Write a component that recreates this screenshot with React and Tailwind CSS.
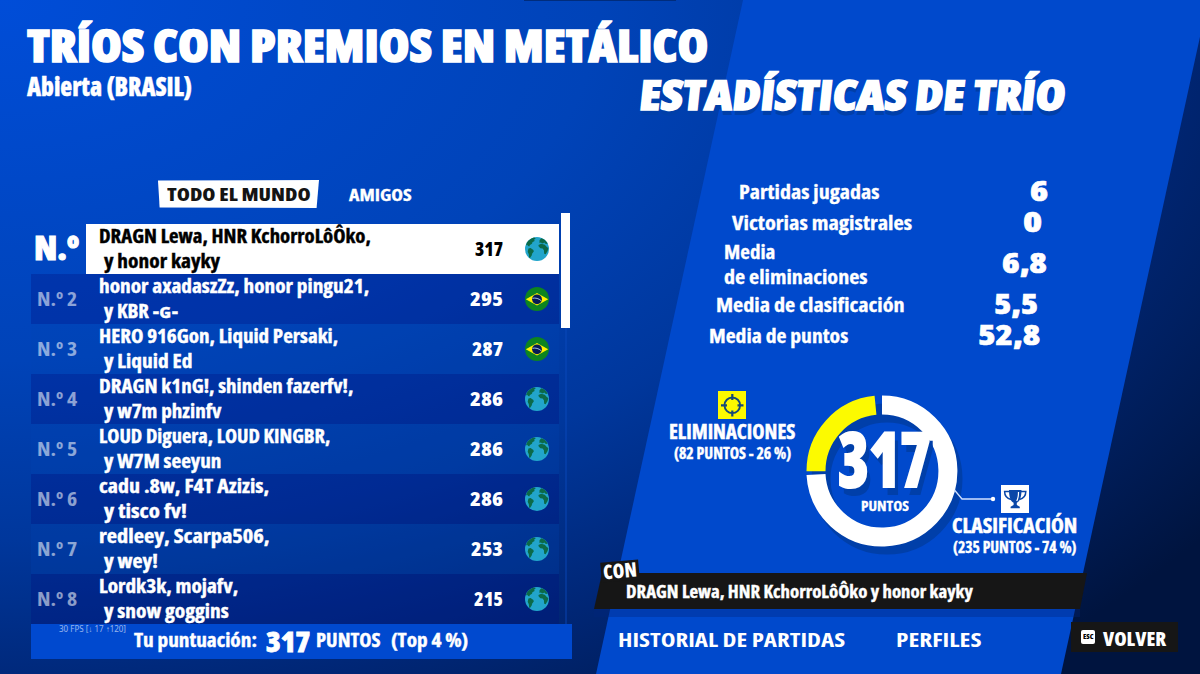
import React, { useLayoutEffect, useRef, useState } from "react";

const rows = [
  { rank: "N.º 2", first: "honor axadaszZz, honor pingu21,", firstW: 270, second: "y KBR -ɢ-", secondW: 74, points: "295", pointsW: 33, region: "br" },
  { rank: "N.º 3", first: "HERO 916Gon, Liquid Persaki,", firstW: 239, second: "y Liquid Ed", secondW: 88, points: "287", pointsW: 31, region: "br" },
  { rank: "N.º 4", first: "DRAGN k1nG!, shinden fazerfv!,", firstW: 254, second: "y w7m phzinfv", secondW: 118, points: "286", pointsW: 33, region: "world" },
  { rank: "N.º 5", first: "LOUD Diguera, LOUD KINGBR,", firstW: 231, second: "y W7M seeyun", secondW: 118, points: "286", pointsW: 33, region: "world" },
  { rank: "N.º 6", first: "cadu .8w, F4T Azizis,", firstW: 170, second: "y tisco fv!", secondW: 83, points: "286", pointsW: 33, region: "world" },
  { rank: "N.º 7", first: "redleey, Scarpa506,", firstW: 171, second: "y wey!", secondW: 54, points: "253", pointsW: 32, region: "world" },
  { rank: "N.º 8", first: "Lordk3k, mojafv,", firstW: 139, second: "y snow goggins", secondW: 125, points: "215", pointsW: 29, region: "world" },
];

// Squeezes a line of text to the given width, for the condensed lettering
const Fit = ({ w, className = "", children }) => {
  const ref = useRef(null);
  const [scale, setScale] = useState(1);

  useLayoutEffect(() => {
    setScale(w / ref.current.offsetWidth);
  }, [w, children]);

  return (
    <span className={`block shrink-0 whitespace-nowrap ${className}`} style={{ width: w }}>
      <span
        ref={ref}
        className="inline-block origin-left align-top"
        style={{ transform: `scaleX(${scale})` }}
      >
        {children}
      </span>
    </span>
  );
};

const Globe = () => (
  <svg viewBox="0 0 24 24" className="size-6 shrink-0">
    <circle cx="12" cy="12" r="12" fill="#22a5cb" />
    <g fill="#0c6a48">
      <path d="M2 5.600C3.600 3.100 6 1.300 9 .5l1.800.8-1.600 1.300.4 1.300-2.200 1.300-.4 1.600-2 1.200-.8 1.500-1.300-.8-.6-.9-1.400.6z" />
      <path d="M3.400 11.600l2.200-.5 2.800 1.800.4 1.500-1.600 2.100-.5 2-1.700 2.500-.9-.6-.3-3.100-1.100-2.500z" />
      <path d="M14.500 3.300l1.800-2 3 1.300 2.400 2.400.9 1.900-2.200-.2-1-1.100-1.700.8-1.900-.8-1.300.3z" />
      <path d="M13.400 7.900l2.800-1.100 3.600.9 2 2.300 1.500.9-.7 3.100-2 3.200-1.400-.4-.3-3.500-1.300-1.700-2.200-.3-1.700-1.700z" />
    </g>
  </svg>
);

const Brazil = () => (
  <svg viewBox="0 0 24 24" className="size-6 shrink-0">
    <circle cx="12" cy="12" r="12" fill="#0d8420" />
    <path d="M.8 12.300L12 6l11.200 6.300L12 18.600z" fill="#fff200" />
    <circle cx="12" cy="12.300" r="4.900" fill="#071b56" />
    <path d="M7.500 11.300c3-.7 6.300.2 8.700 2.400" stroke="#a9bde0" strokeWidth="1" fill="none" />
  </svg>
);

const RowInfo = ({ first, firstW, second, secondW, points, pointsW, region }) => (
  <>
    <div className="flex-1 pb-px pl-[13px] text-[19px] leading-[25px] font-bold [-webkit-text-stroke:0.4px_currentColor]">
      <Fit w={firstW}>{first}</Fit>
      <Fit w={secondW} className="ml-[5px]">{second}</Fit>
    </div>
    <Fit w={pointsW} className="mr-[22px] pb-px text-[19.5px] font-extrabold">{points}</Fit>
    {region === "br" ? <Brazil /> : <Globe />}
  </>
);

const Leaderboard = () => (
  <div className="mt-[5px] ml-1 flex h-[411px] gap-0.5">
    <div className="flex w-[528px] flex-col pt-[11px]">
      <div className="flex h-[50px] items-center">
        <Fit w={45} className="mr-[7px] ml-[3px] pb-1 text-[34px] leading-[46px] font-extrabold [-webkit-text-stroke:1px_white]">N.º</Fit>
        <div className="flex h-full flex-1 items-center bg-white pr-2.5 text-black">
          <RowInfo
            first="DRAGN Lewa, HNR KchorroLôÔko,"
            firstW={272}
            second="y honor kayky"
            secondW={116}
            points="317"
            pointsW={28}
            region="world"
          />
        </div>
      </div>
      {rows.map((row) => (
        <div
          key={row.rank}
          className="flex h-[50px] items-center pr-2.5 odd:bg-[#0044b4]/25 even:bg-[#000c80]/30"
        >
          <Fit w={40} className="mr-[9px] ml-1.5 text-[19.5px] font-bold opacity-55">{row.rank}</Fit>
          <RowInfo {...row} />
        </div>
      ))}
    </div>
    <div className="flex w-[9px] flex-col items-center">
      <div className="h-[115px] w-full bg-white"></div>
      <div className="w-0.5 flex-1 bg-[#0b4cc0]/40"></div>
    </div>
  </div>
);

const StatValue = ({ w, children }) => (
  <Fit w={w} className="pb-[5px] text-[28.5px] leading-[26px] font-extrabold [-webkit-text-stroke:0.6px_white]">{children}</Fit>
);

const Stat = ({ className, label, labelW, value, valueW }) => (
  <div className={`flex h-[31px] items-center justify-between ${className}`}>
    <Fit w={labelW} className="text-[19px] font-bold [-webkit-text-stroke:0.3px_white]">{label}</Fit>
    <StatValue w={valueW}>{value}</StatValue>
  </div>
);

const Donut = () => (
  <div className="grid h-[166px] w-[160px] shrink-0">
    <svg viewBox="806 391 160 166" className="col-start-1 row-start-1 overflow-visible">
      <g fill="none" strokeWidth="19" stroke="#003fa9">
        <circle cx="887" cy="479" r="66" />
      </g>
      <g fill="none" strokeWidth="19">
        <path d="M882 405a66 66 0 1 1-66 69.500" stroke="#fff" />
        <path d="M816 471.300a66 66 0 0 1 59.500-66" stroke="#fcfa00" />
      </g>
      <path d="M954.500 490l7.500 9h29" stroke="#cfe0ff" strokeWidth="1.300" fill="none" />
      <circle cx="993" cy="499" r="2.200" fill="#fff" />
    </svg>
    <div className="z-10 col-start-1 row-start-1 flex flex-col pt-[29px]">
      <Fit
        w={93}
        className="ml-8 text-[76px] leading-[76px] font-extrabold [-webkit-text-stroke:2px_white] [text-shadow:5px_8px_0_#003fa9]"
      >
        317
      </Fit>
      <Fit w={48} className="z-10 mt-[4px] ml-[55px] text-[14px] leading-[12px] font-bold [-webkit-text-stroke:0.3px_white]">PUNTOS</Fit>
    </div>
  </div>
);

const Chart = () => (
  <div className="mt-[39px] flex h-[166px] pl-[69px]">
    <div className="flex w-[126px] shrink-0 flex-col items-center">
      <svg viewBox="0 0 28 28" className="size-7">
        <path d="M0 0h28v28H0z" fill="#fcfa00" />
        <circle cx="14.300" cy="14.300" r="7.800" fill="none" stroke="#164a78" strokeWidth="1.900" />
        <path d="M14.300 3v6M14.300 19.500v6M3 14.300h6M19.500 14.300h6" stroke="#164a78" strokeWidth="2.200" />
      </svg>
      <Fit w={126} className="text-[20.5px] leading-[24px] font-bold [-webkit-text-stroke:0.5px_white]">ELIMINACIONES</Fit>
      <Fit w={117} className="mt-0.5 text-[15.5px] leading-[17px] font-bold [-webkit-text-stroke:0.4px_white]">(82 PUNTOS - 26 %)</Fit>
    </div>
    <div className="ml-[11px]">
      <Donut />
    </div>
    <div className="-ml-[14px] flex w-[125px] shrink-0 flex-col items-center pt-[94px]">
      <svg viewBox="0 0 28 28" className="size-7">
        <path d="M0 0h28v28H0z" fill="#fff" />
        <path d="M8 5h12.500c0 6-1.200 11-4.700 12.800v2.200l3 1.800v1.400H9.600v-1.400l3-1.800v-2.200C9.200 16 8 11 8 5z" fill="#0a47a8" />
        <path d="M8.500 6.500H3.600c0 4 2.400 7 6.400 8M20 6.500h4.800c0 4-2.400 7-6.400 8" fill="none" stroke="#0a47a8" strokeWidth="1.500" />
        <path d="M17.500 7c0 4-.6 7-1.800 9" stroke="#fff" strokeWidth="1.200" fill="none" />
      </svg>
      <Fit w={125} className="text-[20.5px] leading-[24px] font-bold [-webkit-text-stroke:0.5px_white]">CLASIFICACIÓN</Fit>
      <Fit w={123} className="mt-0.5 text-[15.5px] leading-[17px] font-bold [-webkit-text-stroke:0.4px_white]">(235 PUNTOS - 74 %)</Fit>
    </div>
  </div>
);

const App = () => {
  return (
    <div className="grid h-[674px] w-[1200px] overflow-hidden bg-[radial-gradient(1500px_900px_at_0_0,#004dd8_0%,#0043b8_40%,#00379c_60%,#002675_78%,#002062_86%,#00143f_100%)] font-['Open_Sans','Noto_Sans',sans-serif] font-stretch-condensed text-white">
      <div className="col-start-1 row-start-1 bg-[#0049cc] [clip-path:polygon(743px_0,1208px_0,1061px_674px,596px_674px)]"></div>

      {/* edge of the window hidden above */}
      <div className="z-10 col-start-1 row-start-1 ml-[524px] h-px w-[152px] bg-[#002c7c]"></div>

      <div className="z-10 col-start-1 row-start-1 flex w-[600px] flex-col pt-[22px] pl-[27px]">
        <Fit w={681} className="text-[45px] leading-[46px] font-extrabold [-webkit-text-stroke:1.5px_white]">
          TRÍOS CON PREMIOS EN METÁLICO
        </Fit>
        <Fit w={165} className="mt-[4px] text-[27px] leading-[27px] font-extrabold [-webkit-text-stroke:0.4px_white]">Abierta (BRASIL)</Fit>

        <div className="mt-[81px] ml-[131px] flex h-7 items-center gap-[30px]">
          <div className="flex h-full w-[161px] items-center justify-center bg-white text-[#141414] [clip-path:polygon(0_2%,100%_0,98.5%_100%,1%_98%)]">
            <Fit w={143} className="pt-px text-[17.5px] font-extrabold">TODO EL MUNDO</Fit>
          </div>
          <Fit w={63} className="pt-px text-[16px] font-bold [-webkit-text-stroke:0.3px_white]">AMIGOS</Fit>
        </div>

        <Leaderboard />

        <div className="relative ml-1 flex h-[35px] w-[541px] items-center bg-[#0049cf] pb-0.5 pl-[103px]">
          <span className="absolute top-0 left-7 font-['Noto_Sans'] text-[8px] leading-[9px] text-white/60">
            <Fit w={67}>30 FPS [↓ 17 ↑120]</Fit>
          </span>
          <Fit w={123} className="text-[19px] font-bold [-webkit-text-stroke:0.4px_white]">Tu puntuación:</Fit>
          <Fit w={44} className="ml-[9px] text-[29px] leading-[33px] font-extrabold [-webkit-text-stroke:0.8px_white]">317</Fit>
          <Fit w={65} className="ml-1.5 text-[19px] font-bold [-webkit-text-stroke:0.4px_white]">PUNTOS</Fit>
          <Fit w={77} className="ml-2.5 text-[19px] font-bold [-webkit-text-stroke:0.4px_white]">(Top 4 %)</Fit>
        </div>
      </div>

      <div className="z-10 col-start-1 row-start-1 ml-[600px] flex flex-col pt-[73px]">
        <div className="ml-10 -skew-x-6">
          <Fit w={426} className="text-[41.5px] leading-[42px] font-extrabold [-webkit-text-stroke:1.5px_white] [text-shadow:1px_5px_0_#003fa9]">
            ESTADÍSTICAS DE TRÍO
          </Fit>
        </div>

        <div className="mt-[62px] flex flex-col">
          <Stat className="ml-[139px] w-[309px]" label="Partidas jugadas" labelW={140} value="6" valueW={18} />
          <Stat className="ml-[132px] w-[310px]" label="Victorias magistrales" labelW={180} value="0" valueW={19} />
          <div className="ml-[124px] flex h-[51px] w-[323px] items-center justify-between">
            <div className="text-[19px] leading-[25px] font-bold [-webkit-text-stroke:0.3px_white]">
              <Fit w={51}>Media</Fit>
              <Fit w={143}>de eliminaciones</Fit>
            </div>
            <StatValue w={45}>6,8</StatValue>
          </div>
          <Stat className="ml-[116px] w-[322px]" label="Media de clasificación" labelW={189} value="5,5" valueW={44} />
          <Stat className="ml-[109px] w-[331px]" label="Media de puntos" labelW={139} value="52,8" valueW={62} />
        </div>

        <Chart />

        <div className="relative mt-[16px] -ml-1.5 h-11 w-[493px]">
          <div className="h-9 bg-[#161616] [clip-path:polygon(8px_0,100%_0,486px_100%,0_100%)]">
            <Fit w={347} className="ml-8 text-[17.5px] leading-[37px] font-bold [-webkit-text-stroke:0.4px_white]">
              DRAGN Lewa, HNR KchorroLôÔko y honor kayky
            </Fit>
          </div>
          <div className="h-2 w-[486px] bg-[#00267a]/35"></div>
          <div className="absolute -top-[12px] left-[7px] flex h-[20px] w-[38px] -rotate-5 items-center justify-center bg-[#161616]">
            <Fit w={34} className="text-[20px] leading-[20px] font-extrabold">CON</Fit>
          </div>
        </div>

        <div className="mt-[5px] flex h-[30px] items-center pl-[18px]">
          <Fit w={227} className="pt-[5px] text-[20px] font-bold">HISTORIAL DE PARTIDAS</Fit>
          <Fit w={86} className="ml-[51px] pt-[5px] text-[20px] font-bold">PERFILES</Fit>
          <div className="ml-[89px] flex h-full w-[107px] items-center bg-[#161616] pl-2.5">
            <span className="flex size-[14px] items-center justify-center rounded-xs bg-white text-[6px] font-extrabold text-black">
              <Fit w={10}>ESC</Fit>
            </span>
            <Fit w={63} className="ml-2 pt-[3px] text-[20px] font-extrabold">VOLVER</Fit>
          </div>
        </div>
      </div>
    </div>
  );
};

export default App;
